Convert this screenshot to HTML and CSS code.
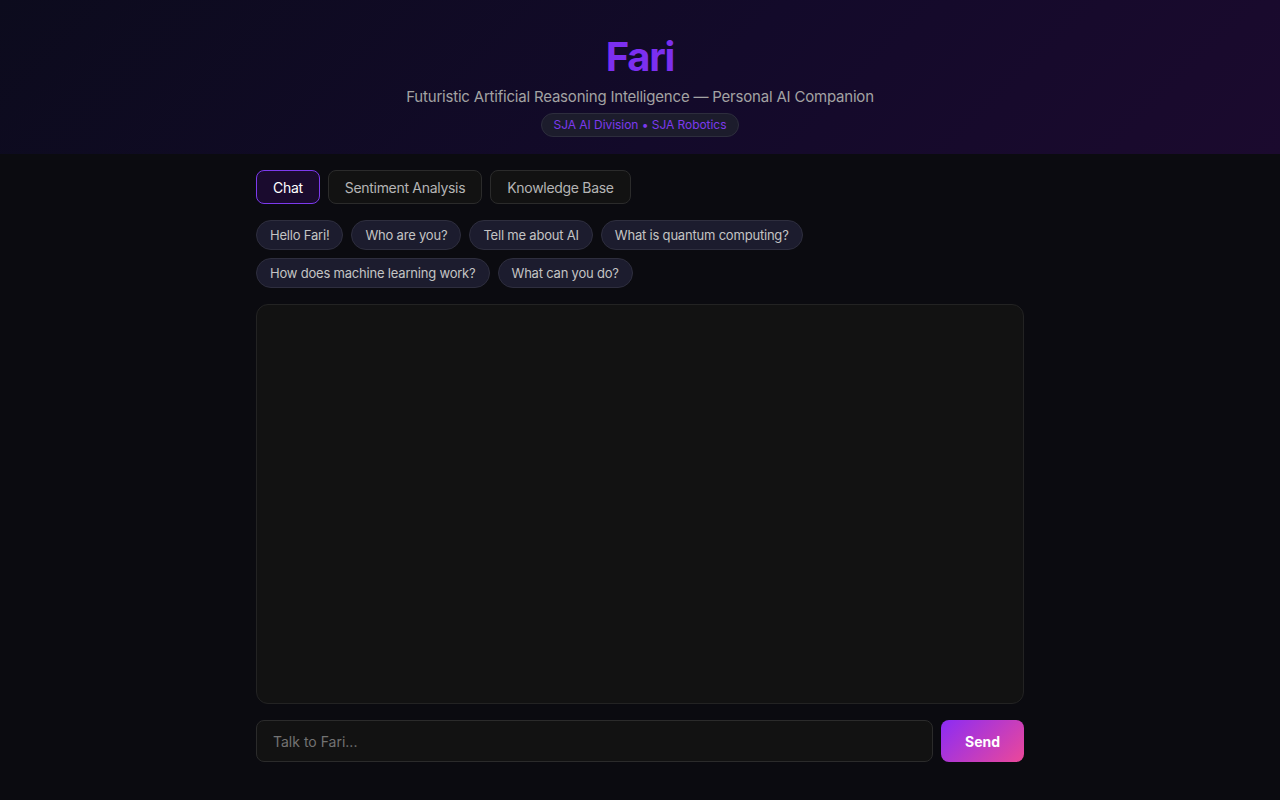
FILE: index.html
```html
<!DOCTYPE html>
<html lang="en">
  <head>
    <meta charset="UTF-8" />
    <meta name="viewport" content="width=device-width, initial-scale=1.0" />
    <title>Fari</title>
    <link rel="stylesheet" href="styles.css">
  </head>
  <body>
    <header class="hero">
      <h1>Fari</h1>
      <p class="tagline">Futuristic Artificial Reasoning Intelligence — Personal AI Companion</p>
      <span class="badge">SJA AI Division • SJA Robotics</span>
    </header>

    <main class="app">
      <!-- Mode tabs -->
      <nav class="tabs">
        <button class="tab active">Chat</button>
        <button class="tab">Sentiment Analysis</button>
        <button class="tab">Knowledge Base</button>
      </nav>

      <!-- Quick prompts -->
      <div class="prompts">
        <button class="prompt">Hello Fari!</button>
        <button class="prompt">Who are you?</button>
        <button class="prompt">Tell me about AI</button>
        <button class="prompt">What is quantum computing?</button>
        <button class="prompt">How does machine learning work?</button>
        <button class="prompt">What can you do?</button>
      </div>

      <div id="messages" class="messages"></div>

      <form class="composer" onsubmit="return false">
        <input type="text" class="composer-input" placeholder="Talk to Fari..." />
        <button type="submit" class="send-btn">Send</button>
      </form>
    </main>
  </body>
</html>
```

FILE: styles.css
```css
body {
  font-family: "Inter", "Noto Sans", sans-serif;
  letter-spacing: -0.2px;
  background-color: #0b0b10;
  color: #e5e5e5;
  margin: 0;
  padding: 0;
}

.hero {
  background: linear-gradient(135deg, #0c0b1d 0%, #130a2a 55%, #1b0a2e 100%);
  text-align: center;
  padding: 34px 0 17px;
}

.hero h1 {
  margin: 0;
  font-size: 40px;
  line-height: 46px;
  font-weight: 700;
  color: #7c2ff0;
  letter-spacing: -1.3px;
}

.tagline {
  margin: 7px 0 6px;
  font-size: 15px;
  line-height: 20px;
  color: #a3a3a3;
}

.badge {
  display: inline-block;
  padding: 0 12px;
  line-height: 22px;
  font-size: 12px;
  letter-spacing: -0.05px;
  color: #7c3aed;
  background-color: #1c1c2c;
  border: 1px solid #2d2d3d;
  border-radius: 12px;
}

.app {
  width: 768px;
  margin: 0 auto;
  padding-top: 16px;
}

.tabs {
  display: flex;
  gap: 8px;
  margin-bottom: 16px;
}

.tab {
  font-family: inherit;
  font-size: 14px;
  letter-spacing: -0.3px;
  height: 34px;
  padding: 0 16px;
  color: #b5b5b5;
  background-color: #121212;
  border: 1px solid #2b2b2b;
  border-radius: 8px;
  cursor: pointer;
}

.tab.active {
  color: #ffffff;
  background-color: #1a0b2e;
  border-color: #7c3aed;
}

.prompts {
  display: flex;
  flex-wrap: wrap;
  gap: 8px;
  margin-bottom: 16px;
}

.prompt {
  font-family: inherit;
  font-size: 13px;
  letter-spacing: -0.2px;
  height: 30px;
  padding: 0 13px;
  color: #c4c4c4;
  background-color: #1c1c2e;
  border: 1px solid #2e2e3e;
  border-radius: 15px;
  cursor: pointer;
}

.messages {
  height: 398px;
  background-color: #121212;
  border: 1px solid #232323;
  border-radius: 12px;
  margin-bottom: 16px;
}

.composer {
  display: flex;
  gap: 8px;
}

.composer-input {
  flex: 1;
  height: 42px;
  box-sizing: border-box;
  padding: 0 16px;
  font-family: inherit;
  font-size: 14px;
  color: #e5e5e5;
  background-color: #121212;
  border: 1px solid #2b2b2b;
  border-radius: 8px;
  outline: none;
}

.composer-input::placeholder {
  color: #737373;
}

.send-btn {
  width: 83px;
  height: 42px;
  font-family: inherit;
  font-size: 14px;
  font-weight: 700;
  color: #ffffff;
  background: linear-gradient(135deg, #8b2cf5 0%, #ec4899 100%);
  border: none;
  border-radius: 8px;
  cursor: pointer;
}
```
